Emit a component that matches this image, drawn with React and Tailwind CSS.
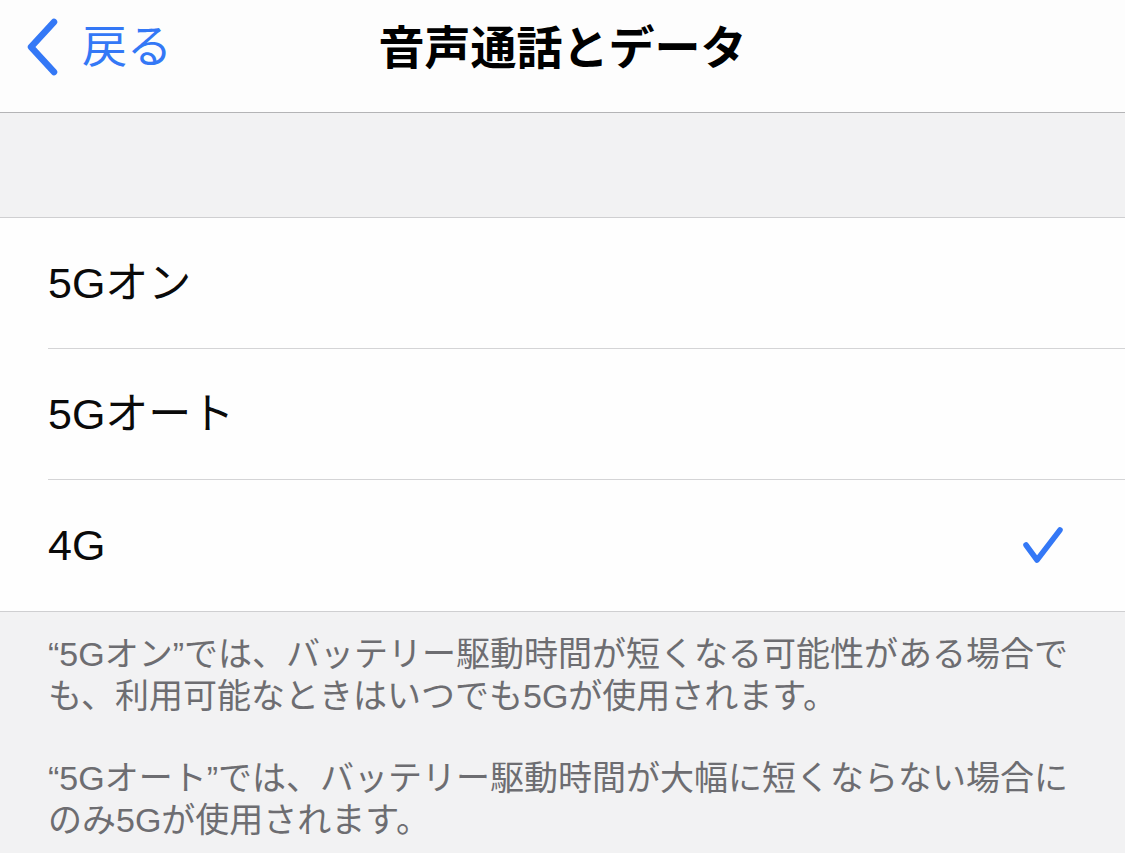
import React from "react";

const font = { fontFamily: '"Liberation Sans", "Noto Sans CJK JP", sans-serif' };

const options = [
  { id: "5g-on", label: "5Gオン" },
  { id: "5g-auto", label: "5Gオート" },
  { id: "4g", label: "4G" },
];

function Chevron() {
  return (
    <svg width="36" height="58" viewBox="0 0 36 58" fill="none">
      <path d="M30 4 L7 29 L30 54" stroke="#3478f6" strokeWidth="6.5" strokeLinecap="round" strokeLinejoin="round" />
    </svg>
  );
}

function Check() {
  return (
    <svg width="44" height="42" viewBox="0 0 44 42" fill="none">
      <path d="M5 20 L16 35 L39 5" stroke="#3478f6" strokeWidth="5.5" strokeLinecap="round" strokeLinejoin="round" />
    </svg>
  );
}

const App = () => {
  const selected = "4g";

  return (
    <div className="min-h-screen w-[1125px] bg-[#f2f2f3] overflow-hidden" style={font}>
      {/* nav bar */}
      <header className="relative h-[113px] bg-[#fdfdfd] border-b border-[#b4b4b6] flex items-center pb-[18px]">
        <button className="flex items-center pl-[24px] text-[#3478f6] text-[45px] leading-none gap-[22px]">
          <Chevron />
          <span>戻る</span>
        </button>
        <h1 className="absolute left-0 right-0 top-[22px] text-center text-[46px] leading-[52px] font-bold text-black pointer-events-none">
          音声通話とデータ
        </h1>
      </header>

      {/* spacer band */}
      <div className="h-[105px] border-b border-[#cfcfd1]" />

      {/* options list */}
      <ul className="bg-[#fefefe] border-b border-[#cfcfd1]">
        {options.map((o, i) => (
          <li key={o.id} className="pl-[48px]">
            <div
              className={
                "h-[131px] flex items-center justify-between pr-[60px] " +
                (i < options.length - 1 ? "border-b border-[#d4d4d6]" : "")
              }
            >
              <span className="text-[43px] leading-none text-[#0a0a0a]">{o.label}</span>
              {selected === o.id && <Check />}
            </div>
          </li>
        ))}
      </ul>

      {/* footer notes */}
      <div className="px-[48px] pt-[21px] text-[34px] leading-[42px] text-[#6d6d71] whitespace-nowrap">
        <p>
          <span className="block">“5Gオン”では、バッテリー駆動時間が短くなる可能性がある場合で</span>
          <span className="block">も、利用可能なときはいつでも5Gが使用されます。</span>
        </p>
        <p className="mt-[40px]">
          <span className="block">“5Gオート”では、バッテリー駆動時間が大幅に短くならない場合に</span>
          <span className="block">のみ5Gが使用されます。</span>
        </p>
      </div>
    </div>
  );
};

export default App;
